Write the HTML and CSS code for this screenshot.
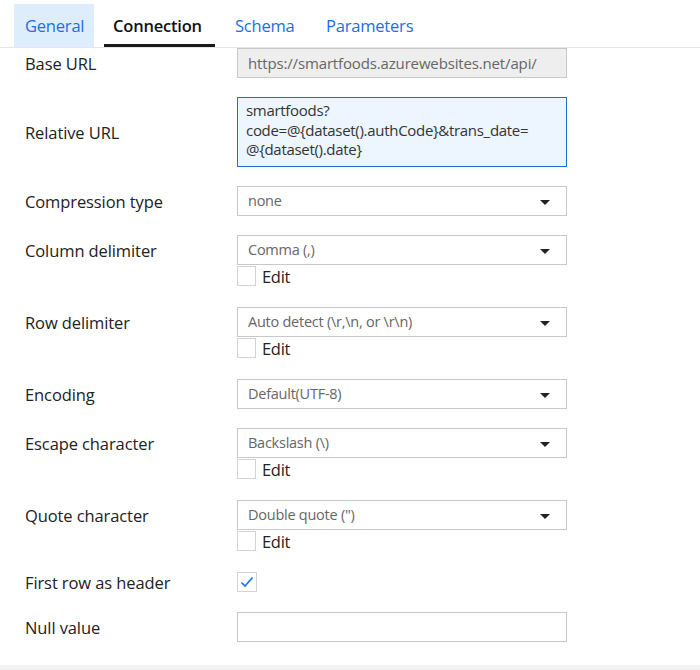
FILE: index.html
```html
<!DOCTYPE html>
<html>
<head>
<meta charset="utf-8">
<link rel="stylesheet" href="styles.css">
</head>
<body>
<div class="page">
  <nav class="tabs">
    <div class="tab tab-hover">General</div>
    <div class="tab tab-active">Connection</div>
    <div class="tab">Schema</div>
    <div class="tab">Parameters</div>
  </nav>
  <div class="form">
    <div class="row row-base">
      <div class="label">Base URL</div>
      <div class="control"><div class="input input-disabled">https://smartfoods.azurewebsites.net/api/</div></div>
    </div>
    <div class="row">
      <div class="label label-tall">Relative URL</div>
      <div class="control"><div class="input input-area">smartfoods?<br>code=@{dataset().authCode}&amp;trans_date=<br>@{dataset().date}</div></div>
    </div>
    <div class="row">
      <div class="label">Compression type</div>
      <div class="control"><div class="select">none<span class="caret"></span></div></div>
    </div>
    <div class="row">
      <div class="label">Column delimiter</div>
      <div class="control">
        <div class="select">Comma (,)<span class="caret"></span></div>
        <div class="check-row"><span class="box"></span>Edit</div>
      </div>
    </div>
    <div class="row">
      <div class="label">Row delimiter</div>
      <div class="control">
        <div class="select">Auto detect (\r,\n, or \r\n)<span class="caret"></span></div>
        <div class="check-row"><span class="box"></span>Edit</div>
      </div>
    </div>
    <div class="row">
      <div class="label">Encoding</div>
      <div class="control"><div class="select">Default(UTF-8)<span class="caret"></span></div></div>
    </div>
    <div class="row">
      <div class="label">Escape character</div>
      <div class="control">
        <div class="select">Backslash (\)<span class="caret"></span></div>
        <div class="check-row"><span class="box"></span>Edit</div>
      </div>
    </div>
    <div class="row">
      <div class="label">Quote character</div>
      <div class="control">
        <div class="select">Double quote (")<span class="caret"></span></div>
        <div class="check-row"><span class="box"></span>Edit</div>
      </div>
    </div>
    <div class="row row-first">
      <div class="label label-short">First row as header</div>
      <div class="control">
        <span class="box box-checked"><svg width="14" height="14" viewBox="0 0 14 14"><path d="M1.5 7.5 L5 11 L12.5 2.5" fill="none" stroke="#1a6ee6" stroke-width="1.6"/></svg></span>
      </div>
    </div>
    <div class="row">
      <div class="label">Null value</div>
      <div class="control"><div class="input"></div></div>
    </div>
  </div>
  <div class="footer"></div>
</div>
</body>
</html>
```
FILE: styles.css
```css
* { box-sizing: border-box; }
html, body { margin: 0; padding: 0; background: #fff; }
body {
  font-family: "Open Sans", "Noto Sans", sans-serif;
  color: #222;
  width: 700px;
  height: 670px;
  overflow: hidden;
}
.page { position: relative; height: 670px; }
.tabs {
  display: flex;
  padding: 4px 0 0 14px;
  height: 48px;
  border-bottom: 1px solid #e6e6e6;
}
.tab {
  height: 43px;
  line-height: 43px;
  font-size: 16.5px;
  color: #1a6ee6;
  letter-spacing: -0.2px;
  flex: none;
}
.tab-hover { background: #deedfc; width: 80px; padding-left: 11px; margin-right: 10px; }
.tab-active {
  color: #111;
  font-weight: 600;
  border-bottom: 3px solid #1a1a1a;
  width: 111px;
  padding-left: 9px;
  letter-spacing: -0.2px;
  margin-right: 20px;
}
.tab:nth-child(3) { width: 91px; }
.form { padding: 0 0 0 25px; }
.row {
  display: flex;
  align-items: flex-start;
  margin-bottom: 19px;
}
.label {
  width: 212px;
  flex: none;
  height: 30px;
  line-height: 31px;
  font-size: 16.5px;
  color: #222;
  letter-spacing: -0.1px;
}
.label-tall { height: 70px; line-height: 72px; }
.control { width: 330px; }
.input {
  height: 30px;
  border: 1px solid #c8c8c8;
  background: #fff;
  font-size: 15px;
  line-height: 28px;
  padding: 0 10px;
  color: #555;
}
.input-disabled { background: #eeeeee; color: #666; letter-spacing: -0.15px; }
.input-area {
  height: 70px;
  border-color: #1f6fd8;
  background: #edf5fe;
  color: #333;
  line-height: 19.5px;
  padding: 3px 8px;
  letter-spacing: -0.3px;
}
.select {
  position: relative;
  height: 30px;
  border: 1px solid #c8c8c8;
  font-size: 14.5px;
  line-height: 28px;
  padding: 0 10px;
  color: #666;
  letter-spacing: -0.25px;
}
.caret {
  position: absolute;
  right: 16px;
  top: 13px;
  width: 0;
  height: 0;
  border-left: 5px solid transparent;
  border-right: 5px solid transparent;
  border-top: 5px solid #222;
}
.check-row {
  display: flex;
  align-items: center;
  height: 20px;
  margin-top: 1px;
  margin-bottom: 2px;
  font-size: 16.5px;
  color: #222;
  gap: 6px;
  letter-spacing: -0.3px;
}
.box {
  display: inline-block;
  width: 19px;
  height: 20px;
  border: 1px solid #d2d2d2;
  background: #fff;
  flex: none;
}
.row-first { margin-bottom: 20px; }
.row-first .label { height: 20px; line-height: 21px; }
.box-checked {
  display: flex;
  align-items: center;
  justify-content: center;
  width: 20px;
  height: 20px;
}
.footer {
  position: absolute;
  left: 0;
  right: 0;
  bottom: 0;
  height: 5px;
  background: #f3f3f3;
}
```
